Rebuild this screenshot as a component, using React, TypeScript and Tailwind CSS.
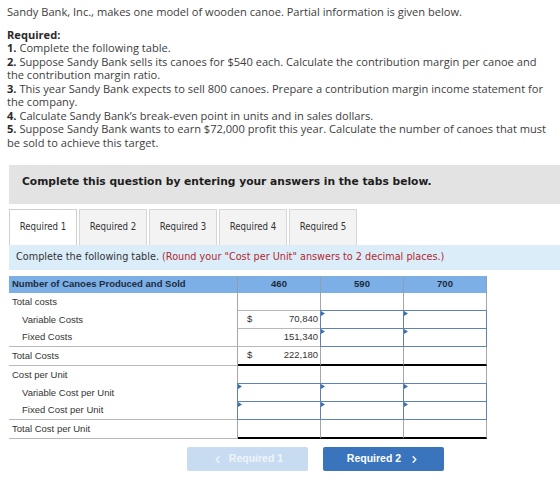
import React from "react";
import { ChevronLeft, ChevronRight } from "lucide-react";

const body = { fontFamily: "'Open Sans', Lato, sans-serif" };
const ui = { fontFamily: "'DejaVu Sans', Verdana, sans-serif" };
const grid = { fontFamily: "'Liberation Sans', Arial, sans-serif" };

type Cell = { kind: "blank" } | { kind: "input" } | { kind: "value"; dollar?: boolean; text: string };

type Row = {
  label: string;
  indent?: boolean;
  labelLine?: boolean;
  total?: boolean;
  cells: Cell[];
};

const B: Cell = { kind: "blank" };
const I: Cell = { kind: "input" };

const rows: Row[] = [
  { label: "Total costs", cells: [B, B, B] },
  { label: "Variable Costs", indent: true, cells: [{ kind: "value", dollar: true, text: "70,840" }, I, I] },
  { label: "Fixed Costs", indent: true, labelLine: true, cells: [{ kind: "value", text: "151,340" }, I, I] },
  { label: "Total Costs", labelLine: true, total: true, cells: [{ kind: "value", dollar: true, text: "222,180" }, B, B] },
  { label: "Cost per Unit", cells: [B, B, B] },
  { label: "Variable Cost per Unit", indent: true, cells: [I, I, I] },
  { label: "Fixed Cost per Unit", indent: true, labelLine: true, cells: [I, I, I] },
  { label: "Total Cost per Unit", labelLine: true, total: true, cells: [B, B, B] },
];

function ValueCell({ cell, total }: { cell: Cell; total?: boolean }) {
  const bottom = total ? "border-b-2 border-b-black h-[19px]" : "border-b border-b-[#b8b8b8] h-[18px]";
  return (
    <div className={`relative w-[83px] border-r border-r-[#a6a6a6] ${bottom}`}>
      {cell.kind === "value" && (
        <div className="flex h-full items-center justify-between pl-[9px] pr-[2px] text-[9.5px] text-[#333]">
          <span>{cell.dollar ? "$" : ""}</span>
          <span>{cell.text}</span>
        </div>
      )}
      {cell.kind === "input" && (
        <div className="absolute -left-px -top-px right-[-1px] bottom-[-1px] border-[1.5px] border-[#5f82b4] bg-white">
          <svg width="5" height="6" viewBox="0 0 5 6" className="absolute left-0 top-0">
            <path d="M0 0 L4 2.5 L0 5 Z" fill="#3f6fb3" />
          </svg>
        </div>
      )}
    </div>
  );
}

export default function App() {
  const tabs = ["Required 1", "Required 2", "Required 3", "Required 4", "Required 5"];
  return (
    <div className="w-[560px] h-[481px] overflow-hidden bg-white">
      <div className="pt-[5px] pl-[7px] text-[11.1px] leading-[13.5px] text-[#3d3d3d] whitespace-nowrap" style={body}>
        <p>Sandy Bank, Inc., makes one model of wooden canoe. Partial information is given below.</p>
        <p className="mt-[9px] font-bold text-[#2a2a2a]">Required:</p>
        <p><b className="text-[#2a2a2a]">1.</b> Complete the following table.</p>
        <p>
          <b className="text-[#2a2a2a]">2.</b> Suppose Sandy Bank sells its canoes for $540 each. Calculate the contribution margin per canoe and
          <br />
          the contribution margin ratio.
        </p>
        <p>
          <b className="text-[#2a2a2a]">3.</b> This year Sandy Bank expects to sell 800 canoes. Prepare a contribution margin income statement for
          <br />
          the company.
        </p>
        <p><b className="text-[#2a2a2a]">4.</b> Calculate Sandy Bank’s break-even point in units and in sales dollars.</p>
        <p>
          <b className="text-[#2a2a2a]">5.</b> Suppose Sandy Bank wants to earn $72,000 profit this year. Calculate the number of canoes that must
          <br />
          be sold to achieve this target.
        </p>
      </div>

      <div className="ml-[9px] mt-[16px] h-[39px] bg-[#e3e3e3] pl-[13px] pt-[10px]" style={ui}>
        <p className="text-[10.7px] leading-[14px] font-bold text-[#1e1e1e]">
          Complete this question by entering your answers in the tabs below.
        </p>
      </div>

      <div className="ml-[9px] mt-[5px] flex gap-[2px]" style={ui}>
        {tabs.map((t, i) => (
          <div
            key={t}
            className={`flex h-[36px] w-[68px] items-center justify-center border border-b-0 text-[9.6px] font-stretch-condensed text-[#333] ${
              i === 0 ? "bg-white border-[#cfcfcf]" : "bg-[#f3f3f3] border-[#d6d6d6]"
            }`}
          >
            {t}
          </div>
        ))}
      </div>

      <div className="ml-[9px] flex h-[25px] items-center bg-[#dcedfa] pl-[7px] text-[9.7px] text-[#333]" style={ui}>
        <span>Complete the following table.&nbsp;</span>
        <span className="text-[#b3282d]">(Round your "Cost per Unit" answers to 2 decimal places.)</span>
      </div>

      <div className="ml-[9px] mt-[6px] w-[478px]" style={grid}>
        <div className="flex h-[17px] bg-[#7bafe6] text-[9.5px] font-bold text-[#1d2b3c]">
          <div className="flex w-[229px] items-center border-r border-r-[#8f9fb3] pl-[3px]">Number of Canoes Produced and Sold</div>
          {["460", "590", "700"].map((h) => (
            <div key={h} className="flex w-[83px] items-center justify-center border-r border-r-[#8f9fb3]">
              {h}
            </div>
          ))}
        </div>
        {rows.map((r) => (
          <div key={r.label} className="flex">
            <div
              className={`flex w-[229px] items-center border-r border-r-[#a6a6a6] text-[9.5px] text-[#333] ${
                r.indent ? "pl-[13px]" : "pl-[3px]"
              } ${r.total ? "h-[19px]" : "h-[18px]"} ${r.labelLine ? "border-b border-b-[#b8b8b8]" : ""}`}
            >
              {r.label}
            </div>
            {r.cells.map((c, j) => (
              <ValueCell key={j} cell={c} total={r.total} />
            ))}
          </div>
        ))}
      </div>

      <div className="mt-[8px] flex gap-[15px] pl-[187px]" style={grid}>
        <button className="flex h-[24px] w-[121px] items-center justify-center gap-[6px] rounded-[2px] bg-[#c8dcf1] text-[10.5px] font-bold text-[#eef4fb]">
          <ChevronLeft size={11} strokeWidth={3} />
          Required 1
        </button>
        <button className="flex h-[24px] w-[121px] items-center justify-center gap-[8px] rounded-[2px] bg-[#3a74bd] text-[10.5px] font-bold text-white">
          Required 2
          <ChevronRight size={11} strokeWidth={3} />
        </button>
      </div>
    </div>
  );
}
